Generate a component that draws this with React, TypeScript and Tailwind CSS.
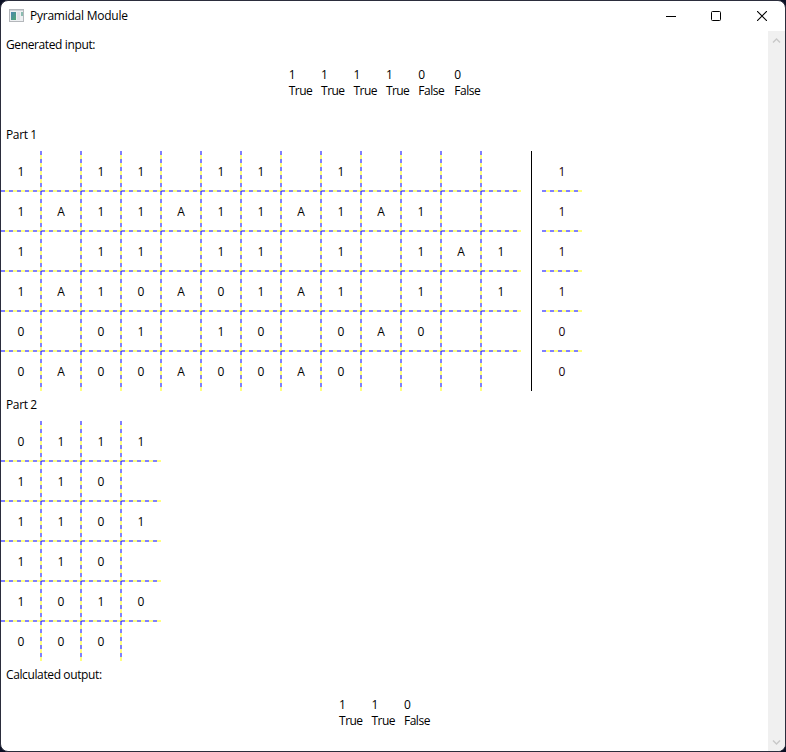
import React from "react";

const PART_ONE = [
  "1.11.11.1....",
  "1A11A11A1A1..",
  "1.11.11.1.1A1",
  "1A10A01A1.1.1",
  "0.01.10.0A0..",
  "0A00A00A0....",
];
const RESULTS = ["1", "1", "1", "1", "0", "0"];
const PART_TWO = ["0111", "110.", "1101", "110.", "1010", "000."];

const H_DASH =
  "bg-[repeating-linear-gradient(90deg,rgba(0,0,255,0.5)_0px,rgba(0,0,255,0.5)_4px,rgba(255,255,0,0.5)_4px,rgba(255,255,0,0.5)_8px)]";
const V_DASH =
  "bg-[repeating-linear-gradient(180deg,rgba(0,0,255,0.5)_0px,rgba(0,0,255,0.5)_4px,rgba(255,255,0,0.5)_4px,rgba(255,255,0,0.5)_8px)]";

function DashedGrid({ rows }: { rows: string[] }) {
  const cols = rows[0].length;
  return (
    <div className="relative w-max">
      {rows.map((row, r) => (
        <div key={r} className="flex h-10">
          {row.split("").map((c, i) => (
            <div key={i} className="flex h-10 w-10 items-center justify-center pt-px">
              {c === "." ? "" : c}
            </div>
          ))}
        </div>
      ))}
      {rows.slice(1).map((_, i) => (
        <div
          key={"h" + i}
          className={"absolute left-0 h-0.5 w-full " + H_DASH}
          style={{ top: (i + 1) * 40 - 1 }}
        />
      ))}
      {Array.from({ length: cols - 1 }, (_, i) => (
        <div
          key={"v" + i}
          className={"absolute top-0 h-full w-0.5 " + V_DASH}
          style={{ left: (i + 1) * 40 - 1 }}
        />
      ))}
    </div>
  );
}

function Bits({ bits }: { bits: number[] }) {
  return (
    <div className="flex h-[60px] justify-center gap-[10px] pt-[6px] leading-4">
      {bits.map((b, i) => (
        <div key={i} className={b ? "w-[22.4px]" : "w-[26px]"}>
          <div>{b}</div>
          <div className={"whitespace-nowrap " + (b ? "tracking-[-0.55px]" : "tracking-[-0.45px]")}>
            {b ? "True" : "False"}
          </div>
        </div>
      ))}
    </div>
  );
}

function Label({ children }: { children: React.ReactNode }) {
  return (
    <div className="flex h-[30px] items-center pb-[2px] pl-[5px] tracking-[-0.38px]">{children}</div>
  );
}

export default function App() {
  return (
    <div className="h-[752px] w-[786px] overflow-hidden bg-[#0b1024]">
      <div className="flex h-full w-full flex-col overflow-hidden rounded-lg border border-[#2b2d3c] bg-white font-['Open_Sans','Noto_Sans',sans-serif] text-[12px] text-black">
        <header className="flex h-[30px] shrink-0 items-center pl-2">
          <svg width="15" height="13" viewBox="0 0 15 13" className="mr-[6px] mb-px">
            <defs>
              <linearGradient id="pane" x1="0" y1="0" x2="1" y2="1">
                <stop offset="0" stopColor="#4a86b0" />
                <stop offset="1" stopColor="#50a773" />
              </linearGradient>
            </defs>
            <rect x="0.5" y="0.5" width="14" height="12" fill="#eef0f2" stroke="#b4b7bb" />
            <path d="M1 1.5h13" stroke="#ced2d7" />
            <rect x="2" y="3" width="5" height="8" fill="url(#pane)" />
            <rect x="8" y="3" width="3" height="8" fill="#e0e2e7" />
            <rect x="12" y="3" width="2" height="4" fill="#8bbcb0" />
          </svg>
          <span className="tracking-[-0.24px]">Pyramidal Module</span>
          <div className="ml-auto flex h-full">
            <div className="flex w-[46px] items-center justify-center">
              <svg width="10" height="10"><path d="M0 5.5h10" stroke="#000" /></svg>
            </div>
            <div className="flex w-[45px] items-center justify-center pr-px">
              <svg width="10" height="10"><rect x="0.5" y="0.5" width="9" height="9" rx="1" fill="none" stroke="#000" /></svg>
            </div>
            <div className="flex w-[46px] items-center justify-center">
              <svg width="10" height="10"><path d="M0 0l10 10M10 0L0 10" stroke="#000" strokeWidth="1.1" /></svg>
            </div>
          </div>
        </header>
        <div className="flex min-h-0 flex-1">
          <main className="flex-1">
            <Label>Generated input:</Label>
            <Bits bits={[1, 1, 1, 1, 0, 0]} />
            <Label>Part 1</Label>
            <div className="flex">
              <DashedGrid rows={PART_ONE} />
              <div className="ml-[10px] h-[240px] w-px bg-black" />
              <div className="ml-[10px] text-[#18000c]">
                <DashedGrid rows={RESULTS} />
              </div>
            </div>
            <Label>Part 2</Label>
            <DashedGrid rows={PART_TWO} />
            <Label>Calculated output:</Label>
            <Bits bits={[1, 1, 0]} />
          </main>
          <aside className="flex w-[17px] flex-col items-center justify-between bg-[#f0f0f0] pt-[6px] pb-[5px]">
            <svg width="9" height="7"><path d="M1 5.5l3.5-3.5L8 5.5" fill="none" stroke="#c8c8c8" strokeWidth="1.4" /></svg>
            <svg width="9" height="7"><path d="M1 1.5l3.5 3.5L8 1.5" fill="none" stroke="#c8c8c8" strokeWidth="1.4" /></svg>
          </aside>
        </div>
      </div>
    </div>
  );
}
